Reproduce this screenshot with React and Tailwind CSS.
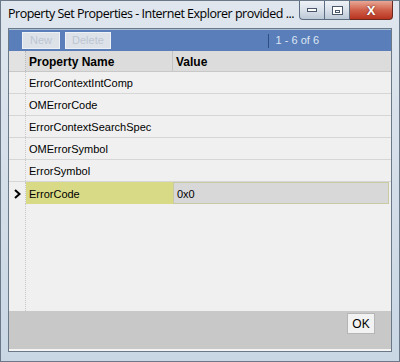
import React from "react";

const rows = [
  "ErrorContextIntComp",
  "OMErrorCode",
  "ErrorContextSearchSpec",
  "OMErrorSymbol",
  "ErrorSymbol",
];

function WindowButtons() {
  return (
    <div className="flex h-[19px] self-start mr-[6px]">
      <div className="w-[26px] h-full border border-[#5d6e82] border-t-0 rounded-bl-[4px] bg-gradient-to-b from-[#eef2f6] via-[#d9e1ea] to-[#bcc8d6] flex items-center justify-center">
        <div className="w-[10px] h-[4px] border border-[#4a586a] bg-white" />
      </div>
      <div className="w-[25px] h-full border border-[#5d6e82] border-t-0 border-l-0 bg-gradient-to-b from-[#eef2f6] via-[#d9e1ea] to-[#bcc8d6] flex items-center justify-center">
        <div className="w-[11px] h-[9px] border border-[#4a586a] bg-white flex items-end justify-center pb-[1px]">
          <div className="w-[5px] h-[3px] border border-[#4a586a]" />
        </div>
      </div>
      <div className="w-[43px] h-full border border-[#6b2a20] border-t-0 border-l-0 rounded-br-[4px] bg-gradient-to-b from-[#e8a796] via-[#d0604a] to-[#b8321e] flex items-center justify-center">
        <span className="text-white font-bold text-[13px] leading-none font-['Liberation_Sans',sans-serif] [text-shadow:0_0_2px_#5a1a10]">
          X
        </span>
      </div>
    </div>
  );
}

export default function App() {
  return (
    <div className="w-[400px] h-[362px] flex flex-col bg-gradient-to-b from-[#dfe6ee] to-[#c9d6e4] border border-[#6a7888] font-['Liberation_Sans',sans-serif] overflow-hidden">
      <div className="h-[27px] flex items-start justify-between shrink-0">
        <div className="pl-[7px] pt-[4px] text-[12.5px] text-black font-['Open_Sans',sans-serif] tracking-[-0.5px] whitespace-nowrap">
          Property Set Properties - Internet Explorer provided ...
        </div>
        <WindowButtons />
      </div>

      <div className="flex-1 mx-[7px] mb-[9px] flex flex-col border border-[#6a7888] bg-[#f0f0f0]">
        <div className="h-[22px] shrink-0 bg-[#5a7eb9] border-t border-[#a9bcd8] flex items-center px-[13px]">
          <div className="h-[17px] px-[7px] bg-[#dde2e9] border border-[#eef1f5] text-[11px] text-[#bcc5d2] flex items-center">
            New
          </div>
          <div className="ml-[5px] h-[17px] px-[6px] bg-[#dde2e9] border border-[#eef1f5] text-[11px] text-[#bcc5d2] flex items-center">
            Delete
          </div>
          <div className="ml-auto mr-[59px] flex items-center">
            <div className="w-px h-[14px] bg-[#2e4f86] mr-[7px]" />
            <span className="text-[11px] text-[#dde6f3]">1 - 6 of 6</span>
          </div>
        </div>

        <div className="h-[21px] shrink-0 flex bg-[#dcdcdc] border-b border-[#c8c8c8]">
          <div className="w-[17px] border-r border-dotted border-[#b8b8b8] bg-[#e2e2e2]" />
          <div className="w-[147px] border-r border-[#c4c4c4] pl-[3px] pt-[2px] flex items-center text-[12px] font-bold text-black">
            Property Name
          </div>
          <div className="flex-1 pl-[3px] pt-[2px] flex items-center text-[12px] font-bold text-black">
            Value
          </div>
        </div>

        <div className="flex-1 flex flex-col">
          {rows.map((r) => (
            <div key={r} className="h-[22px] shrink-0 flex border-b border-[#d6d6d6]">
              <div className="w-[17px] border-r border-dotted border-[#c8c8c8]" />
              <div className="w-[147px] pl-[3px] pt-[2px] flex items-center text-[11px] text-black">
                {r}
              </div>
              <div className="flex-1" />
            </div>
          ))}
          <div className="h-[22px] shrink-0 flex">
            <div className="w-[17px] border-r border-dotted border-[#c8c8c8] flex items-center justify-center pt-[1px]">
              <svg width="7" height="10" viewBox="0 0 7 10">
                <path d="M1 1 L5.5 5 L1 9" fill="none" stroke="#000" strokeWidth="2" />
              </svg>
            </div>
            <div className="w-[147px] pl-[3px] pt-[2px] flex items-center text-[11px] text-black bg-[#d9da86]">
              ErrorCode
            </div>
            <div className="flex-1 mr-[2px] border border-[#c9c9a4] bg-[#d8d8d8] pl-[3px] pt-[2px] flex items-center text-[11px] text-black">
              0x0
            </div>
          </div>
          <div className="flex-1 flex">
            <div className="w-[17px] border-r border-dotted border-[#c8c8c8]" />
          </div>
        </div>

        <div className="h-[40px] shrink-0 bg-[#c8c8c8] flex items-start justify-end pr-[16px] pt-[2px] border-b-2 border-[#f4f4f4]">
          <div className="h-[21px] w-[28px] bg-[#f2f2f2] border border-[#b6b6b6] flex items-center justify-center text-[12px] text-black">
            OK
          </div>
        </div>
      </div>
    </div>
  );
}
